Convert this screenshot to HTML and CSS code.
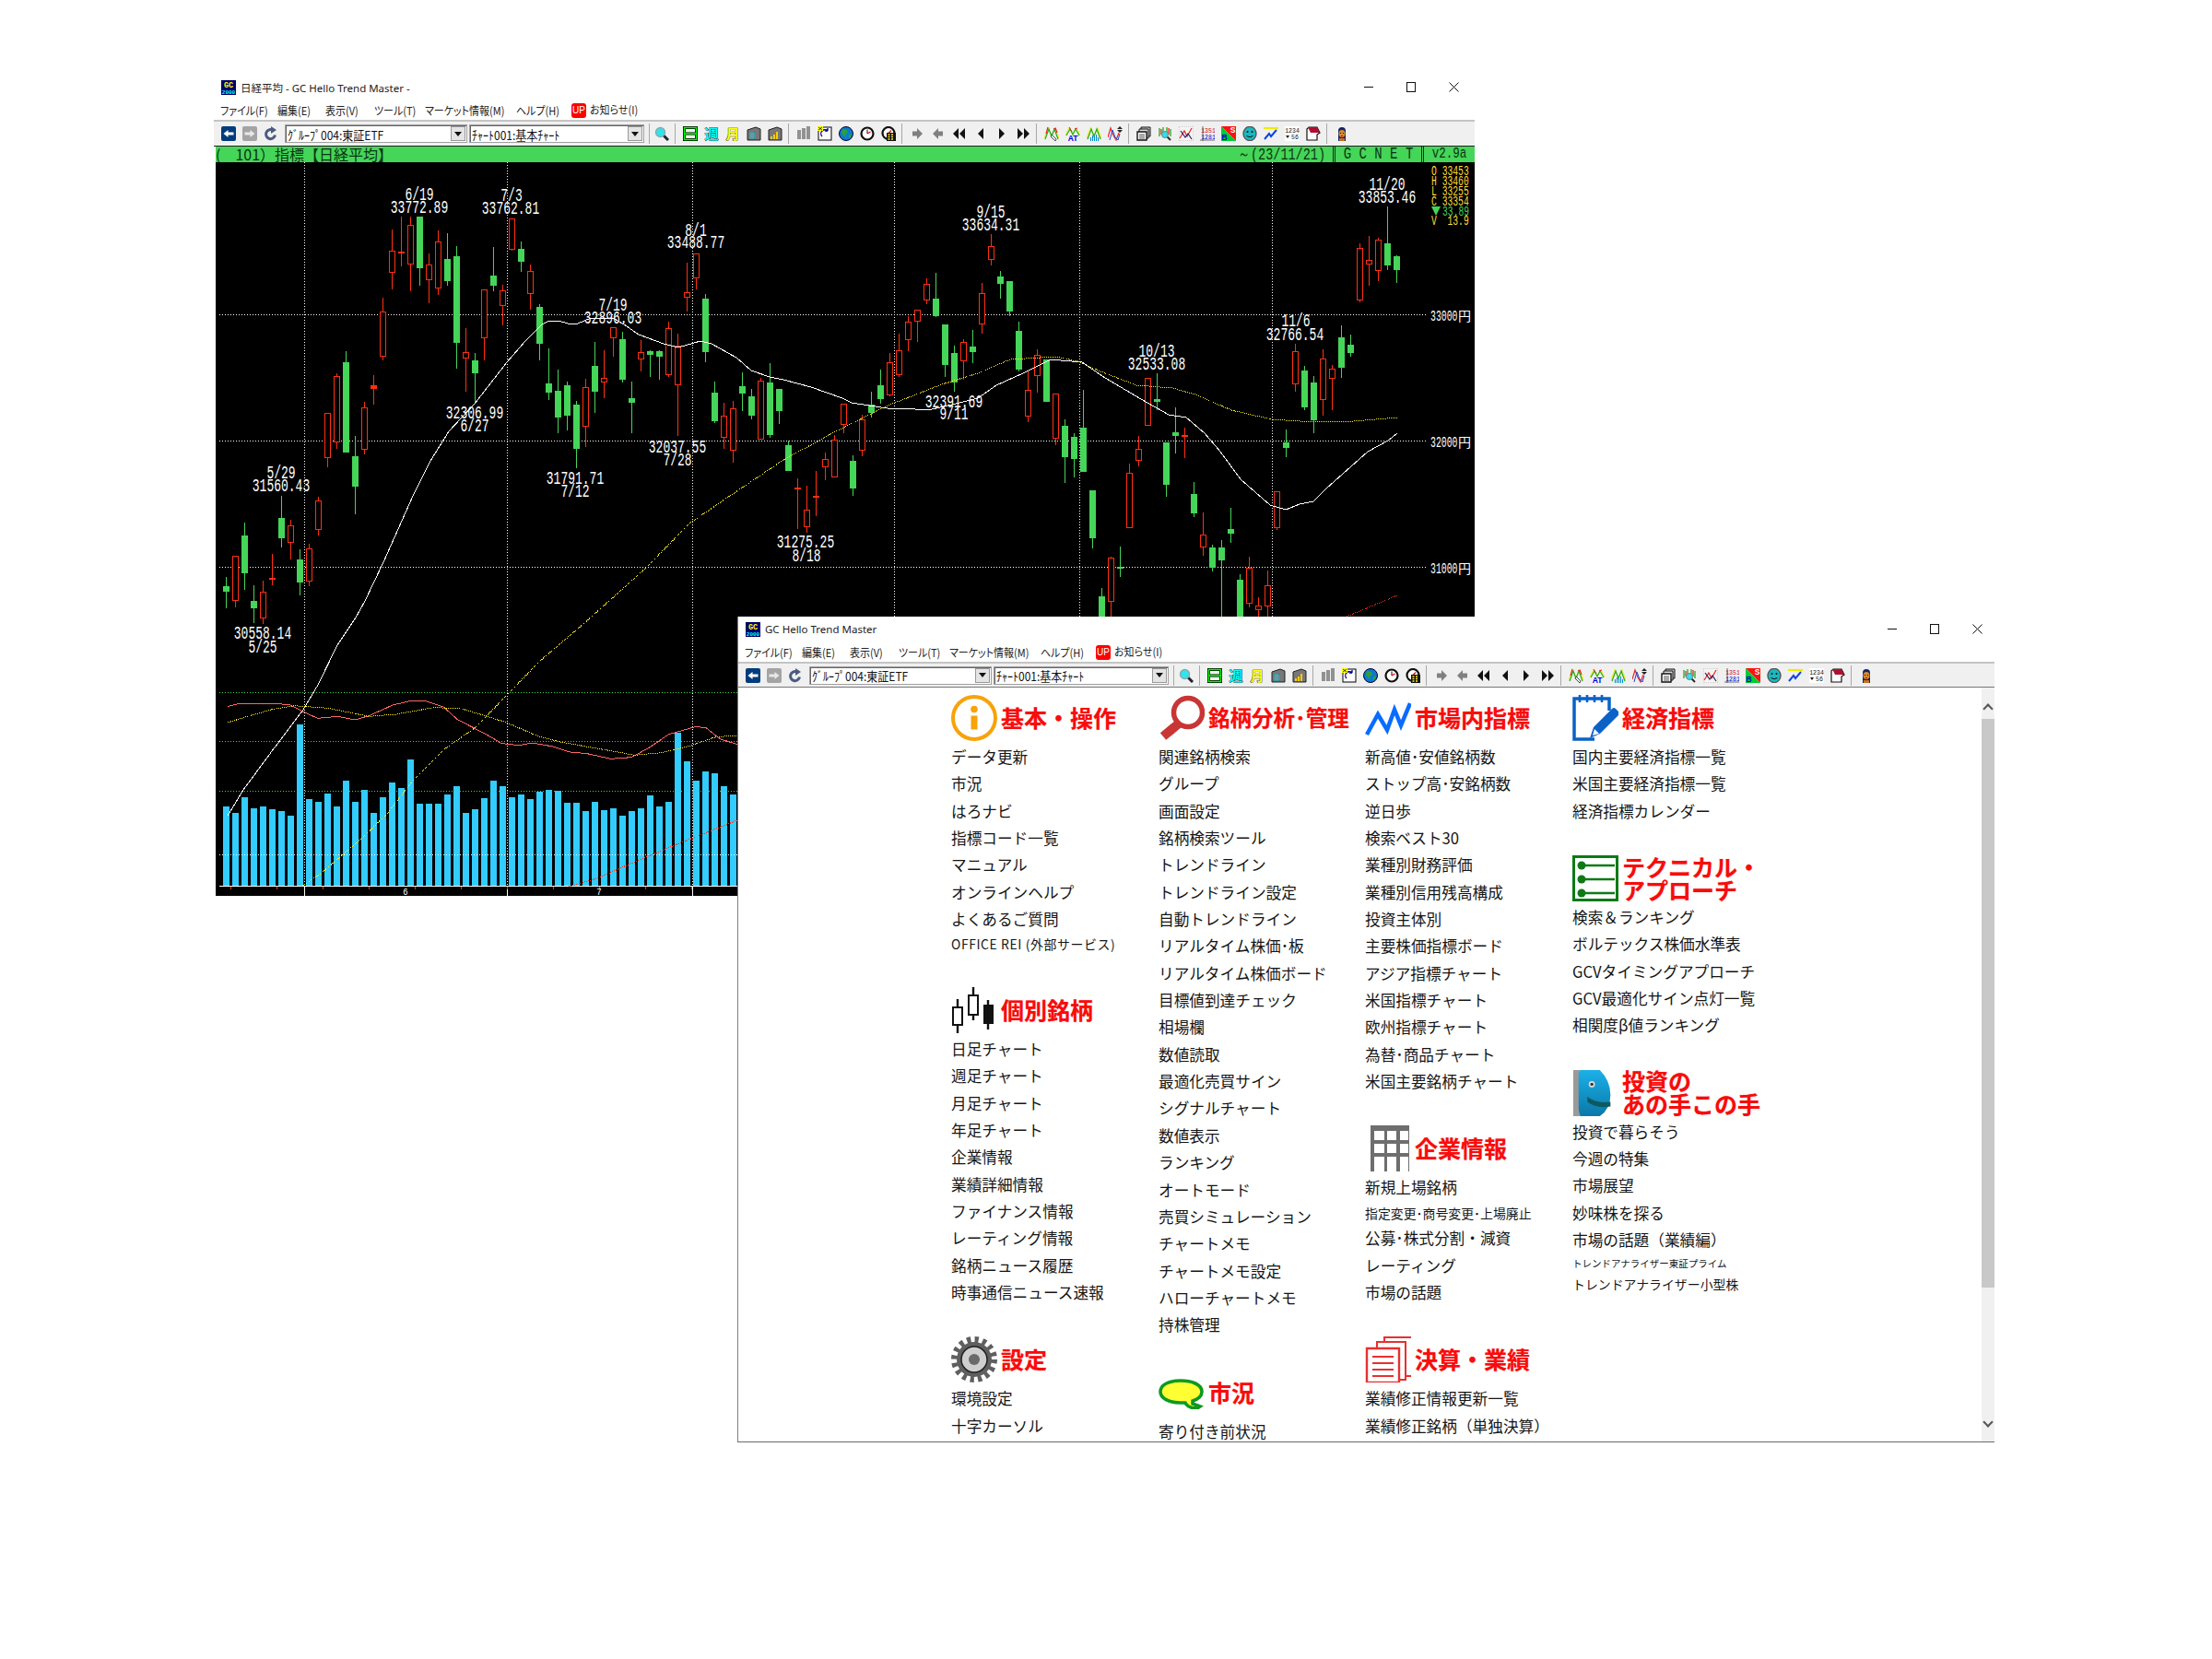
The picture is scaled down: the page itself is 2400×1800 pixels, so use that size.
FILE: index.html
```html
<!DOCTYPE html>
<html lang="ja">
<head>
  <meta charset="UTF-8">
  <title>GC Hello Trend Master</title>
  <link rel="stylesheet" href="styles.css">
</head>
<body>
  <svg class="defs" width="0" height="0">
    <defs>
      <symbol id="t-back" viewBox="0 0 16 16"><rect width="16" height="16" rx="2" fill="#003c7c"/><path d="M2.500 8l5-4v2.500h6v3h-6V12z" fill="#fff"/></symbol>
      <symbol id="t-fwd" viewBox="0 0 16 16"><rect width="16" height="16" rx="2" fill="#a4a4a4"/><path d="M13.500 8l-5-4v2.500h-6v3h6V12z" fill="#e8e8e8"/></symbol>
      <symbol id="t-reload" viewBox="0 0 16 16"><path d="M12.500 9.500a5 5 0 1 1-3-5.500" fill="none" stroke="#4a5c80" stroke-width="3"/><path d="M8 0l6 4-6 4z" fill="#4a5c80"/></symbol>
      <symbol id="t-mag" viewBox="0 0 16 16"><path d="M10 10l5 5" stroke="#223" stroke-width="3"/><circle cx="6.500" cy="6.500" r="5" fill="#2fe4ee" stroke="#8aa" stroke-width="1.400"/></symbol>
      <symbol id="t-day" viewBox="0 0 16 16"><rect x="1.500" y="1.500" width="13" height="13" fill="none" stroke="#000" stroke-width="3"/><path d="M1 8h14" stroke="#000" stroke-width="3"/><rect x="1.500" y="1.500" width="13" height="13" fill="none" stroke="#0f0" stroke-width="1.500"/><path d="M2 8h12" stroke="#0f0" stroke-width="1.500"/></symbol>
      <symbol id="t-week" viewBox="0 0 16 16"><text x="8" y="14" text-anchor="middle" class="tb-glyph" fill="#0ff">週</text></symbol>
      <symbol id="t-month" viewBox="0 0 16 16"><text x="8" y="14" text-anchor="middle" class="tb-glyph" fill="#ff0">月</text></symbol>
      <symbol id="t-bldg" viewBox="0 0 16 16"><path d="M1 4l9-3 5 2v12H1z" fill="#777" stroke="#222"/><path d="M3 6h7v8H3z" fill="#2a8a9a"/><path d="M3 8h7M3 10h7M3 12h7M5 6v8M7 6v8" stroke="#aaa" stroke-width=".6"/></symbol>
      <symbol id="t-bldg2" viewBox="0 0 16 16"><path d="M1 4l9-3 5 2v12H1z" fill="#777" stroke="#222"/><path d="M3 11h2v3H3zM6 9h2v5H6zM9 6h2v8H9z" fill="#fc0"/></symbol>
      <symbol id="t-list" viewBox="0 0 16 16"><path d="M1 5h4M1 7h4M1 9h4M1 11h4M1 13h4M6 3h4M6 5h4M6 7h4M6 9h4M6 11h4M6 13h4M11 1h4M11 3h4M11 5h4M11 7h4M11 9h4M11 11h4M11 13h4" stroke="#333" stroke-width="1"/></symbol>
      <symbol id="t-sync" viewBox="0 0 16 16"><rect x="1" y="1" width="14" height="14" fill="#fff" stroke="#000"/><path d="M5 11a4 4 0 0 1 6-6M11 5l0-3M11 5l-3 0" fill="none" stroke="#008" stroke-width="1.300"/><path d="M0 0h6v5H0z" fill="#ff0"/><path d="M1 1l4 3M5 1L1 4" stroke="#000" stroke-width=".7"/></symbol>
      <symbol id="t-globe" viewBox="0 0 16 16"><circle cx="8" cy="8" r="7.500" fill="#0a7ad0" stroke="#003"/><path d="M4 3l5 1 1 3-3 2 1 3-3-2-2-3zM11 9l3-1-1 4-2 1z" fill="#2aa040"/></symbol>
      <symbol id="t-clock" viewBox="0 0 16 16"><circle cx="8" cy="8" r="6.500" fill="#fff" stroke="#111" stroke-width="2.200"/><path d="M8 8V3.500" stroke="#111"/><path d="M8 8l3.500-2" stroke="#e00" stroke-width="1.200"/></symbol>
      <symbol id="t-calc" viewBox="0 0 16 16"><circle cx="8" cy="7.500" r="6.500" fill="#fff" stroke="#111" stroke-width="2.200"/><path d="M8 7.500l3-3" stroke="#e00" stroke-width="1.200"/><rect x="6" y="7" width="10" height="9" fill="#111"/><path d="M7.500 9h2M11 9h2M7.500 11.500h2M11 11.500h2M7.500 14h2M11 14h2" stroke="#fe3" stroke-width="1.400"/></symbol>
      <symbol id="t-gr" viewBox="0 0 16 16"><path d="M3 5.500h5V2l6 6-6 6v-3.500H3z" fill="#808080"/></symbol>
      <symbol id="t-gl" viewBox="0 0 16 16"><path d="M13 5.500H8V2L2 8l6 6v-3.500h5z" fill="#808080"/></symbol>
      <symbol id="t-ll" viewBox="0 0 16 16"><path d="M7 2v12L1 8zM14 2v12L8 8z" fill="#111"/></symbol>
      <symbol id="t-l" viewBox="0 0 16 16"><path d="M11 2v12L5 8z" fill="#111"/></symbol>
      <symbol id="t-r" viewBox="0 0 16 16"><path d="M5 2v12l6-6z" fill="#111"/></symbol>
      <symbol id="t-rr" viewBox="0 0 16 16"><path d="M2 2v12l6-6zM9 2v12l6-6z" fill="#111"/></symbol>
      <symbol id="t-zz" viewBox="0 0 16 16"><path d="M0 13L4 2l4 8 4-8 4 11" fill="none" stroke="#ee2" stroke-width="1.200"/><path d="M1 14L5 3l3 8 3-8 4 11" fill="none" stroke="#2a2" stroke-width="1.200"/><path d="M2 8l2-7M10 3l3-1M12 2l2 5" fill="none" stroke="#e22" stroke-width="1.200"/><path d="M8 9l5 5-1 2-5-5z" fill="#fff" stroke="#222" stroke-width=".8"/></symbol>
      <symbol id="t-zzat" viewBox="0 0 16 16"><path d="M0 10L4 2l4 6 4-6 4 8" fill="none" stroke="#ee2" stroke-width="1.200"/><path d="M1 10L5 3l3 6 3-6 4 7" fill="none" stroke="#2a2" stroke-width="1.200"/><path d="M4 1l3 5M10 3l3-1" stroke="#e22" stroke-width="1"/><text x="8" y="16" text-anchor="middle" class="tb-at" fill="#00d">AT</text></symbol>
      <symbol id="t-zzbar" viewBox="0 0 16 16"><path d="M0 13L4 2l4 8 4-8 4 11" fill="none" stroke="#ee2" stroke-width="1.200"/><path d="M1 14L5 3l3 8 3-8 4 11" fill="none" stroke="#2a2" stroke-width="1.200"/><path d="M4 12h1v4H4zM6 10h1v6H6zM8 11h1v5H8zM10 9h1v7h-1zM12 12h1v4h-1z" fill="#08c"/></symbol>
      <symbol id="t-zzsw" viewBox="0 0 16 16"><path d="M0 12L3 2l3 8 3 5 3-8" fill="none" stroke="#e22" stroke-width="1.200"/><path d="M2 15L5 4l3 8 3 3 2-7" fill="none" stroke="#24c" stroke-width="1"/><path d="M13 0l3 3h-6zM13 7l3-3h-6z" fill="#222"/></symbol>
      <symbol id="t-docs" viewBox="0 0 16 16"><path d="M5 1h10v10H5z" fill="#ccc" stroke="#111"/><path d="M3 3h10v10H3z" fill="#ddd" stroke="#111"/><path d="M1 6h10v9H1z" fill="#fff" stroke="#111" stroke-width="1.400"/><path d="M3 9h6M3 11h6M3 13h6" stroke="#555"/></symbol>
      <symbol id="t-zzmag" viewBox="0 0 16 16"><path d="M2 2v9M6 1v9M10 1v9M14 3v8" stroke="#2a2" stroke-width="1.300"/><path d="M4 3v6M12 2v7" stroke="#e22" stroke-width="1.300"/><path d="M10 11l4 4" stroke="#222" stroke-width="1.800"/><circle cx="8" cy="9" r="3.500" fill="#3de" stroke="#688"/></symbol>
      <symbol id="t-cross" viewBox="0 0 16 16"><rect width="16" height="16" fill="#f4f4f4" stroke="#aaa" stroke-dasharray="1 1"/><path d="M1 13L6 5l3 6 5-9" fill="none" stroke="#e22" stroke-width="1.200"/><path d="M2 5l5 7 3-4 4 6" fill="none" stroke="#226" stroke-width="1.200"/></symbol>
      <symbol id="t-nums" viewBox="0 0 16 16"><text x="9" y="7" text-anchor="middle" class="tb-num" fill="#c00">1351</text><text x="9" y="14" text-anchor="middle" class="tb-num" fill="#00c">1281</text><path d="M0 15h16M3 0v16" stroke="#333" stroke-width=".7"/></symbol>
      <symbol id="t-bs" viewBox="0 0 16 16"><path d="M0 0h16v16z" fill="#f11"/><path d="M0 0v16h16z" fill="#0c3"/><text x="12.500" y="7" text-anchor="middle" class="tb-at" fill="#fff">S</text><text x="3.500" y="15" text-anchor="middle" class="tb-at" fill="#00d">B</text></symbol>
      <symbol id="t-smile" viewBox="0 0 16 16"><ellipse cx="8" cy="8" rx="7" ry="7.600" fill="#1ab8c0" stroke="#555" stroke-width="1.400"/><circle cx="5.500" cy="6" r="1" fill="#111"/><circle cx="10.500" cy="6" r="1" fill="#111"/><path d="M4.500 10.500q3.500 2.500 7 0" fill="none" stroke="#111" stroke-width="1"/></symbol>
      <symbol id="t-line" viewBox="0 0 16 16"><path d="M0 2h16" stroke="#ee0" stroke-width="2.200"/><path d="M1 14l5-6 2 3 6-7" fill="none" stroke="#14d" stroke-width="2"/></symbol>
      <symbol id="t-1234" viewBox="0 0 16 16"><rect width="16" height="16" fill="#fff"/><text x="8" y="7" text-anchor="middle" class="tb-num" fill="#111">1234</text><path d="M1 10h4l-2 3z" fill="#111"/><text x="11" y="14" text-anchor="middle" class="tb-num" fill="#111">56</text></symbol>
      <symbol id="t-note" viewBox="0 0 16 16"><path d="M3 1h9l3 6-3 2v6H1V3z" fill="#fff" stroke="#111" stroke-width="1.200"/><path d="M2 1h10l3 6H5z" fill="#b01030"/></symbol>
      <symbol id="t-girl" viewBox="0 0 16 16"><path d="M4 16V5a4 4 0 0 1 8 0v11z" fill="#14246a"/><ellipse cx="8" cy="8" rx="3.500" ry="4" fill="#d88a30"/><path d="M6 7.500h1M9 7.500h1" stroke="#111"/><path d="M7 10.500h2" stroke="#c01"/><path d="M5 16v-3h6v3z" fill="#c67020"/></symbol>

      <symbol id="h-info" viewBox="0 0 50 50"><circle cx="25" cy="25" r="23" fill="none" stroke="#f7a30a" stroke-width="4"/><circle cx="25" cy="15.500" r="3.800" fill="#f7a30a"/><path d="M21.500 22.500h7v15h-7z" fill="#f7a30a"/></symbol>
      <symbol id="h-mag" viewBox="0 0 50 50"><circle cx="32" cy="19" r="15.500" fill="none" stroke="#c93535" stroke-width="5.500"/><path d="M22 31L5 45" stroke="#c93535" stroke-width="10"/></symbol>
      <symbol id="h-line" viewBox="0 0 50 50"><path d="M2 43l12-22 10 17 8-22 7 17L49 9" fill="none" stroke="#0a6cff" stroke-width="4.500"/></symbol>
      <symbol id="h-note" viewBox="0 0 50 50"><path d="M24 48H2V4h38v13" fill="none" stroke="#0a62c8" stroke-width="3.500"/><path d="M8 0v8M16 0v8M24 0v8M32 0v8" stroke="#0a62c8" stroke-width="2.600"/><path d="M19 47l4-12 20-20q2-2 4 0l3 3q2 2 0 4L30 42z" fill="#0a62c8"/><path d="M22 44l2-7 5 5z" fill="#fff"/></symbol>
      <symbol id="h-candle" viewBox="0 0 50 50"><path d="M7 13v37M24 0v36M40 14v32" stroke="#111" stroke-width="2.400"/><rect x="2" y="22" width="10" height="19" fill="#fff" stroke="#111" stroke-width="2"/><rect x="19" y="9" width="10" height="21" fill="#fff" stroke="#111" stroke-width="2"/><rect x="35" y="19" width="11" height="21" fill="#111"/></symbol>
      <symbol id="h-gear" viewBox="0 0 50 50"><circle cx="25" cy="25" r="21" fill="none" stroke="#5f5f5f" stroke-width="8" stroke-dasharray="4.120 4.120"/><circle cx="25" cy="25" r="19" fill="#5f5f5f"/><circle cx="25" cy="25" r="14" fill="#cfcfcf" stroke="#222" stroke-width="1.500"/><circle cx="25" cy="25" r="6" fill="#6a6a6a"/></symbol>
      <symbol id="h-talk" viewBox="0 0 50 33"><path d="M24 2c12 0 23 4 23 12 0 5-4 8-10 10l0 3 8 3-3 2c-6 0-11-2-13-6-1 0-3 0-5 0C11 26 2 21 2 14 2 6 12 2 24 2z" fill="#ffff33" stroke="#0c9a22" stroke-width="3.600"/></symbol>
      <symbol id="h-bldg" viewBox="0 0 50 50"><path d="M6 0h42v50H6z" fill="#6e6e6e"/><path d="M10 6h11v10H10zM24 6h10v10H24zM38 6h9v10h-9zM10 20h11v10H10zM24 20h10v10H24zM38 20h9v10h-9zM10 34h11v16H10zM24 34h10v16H24zM38 34h9v16h-9z" fill="#fff"/></symbol>
      <symbol id="h-docs" viewBox="0 0 50 50"><path d="M21 9V1h30v42h-7" fill="#fff" stroke="#e83030" stroke-width="2"/><path d="M13 13V6h31v41h-7" fill="#fff" stroke="#e83030" stroke-width="2"/><path d="M2 13h35v37H2z" fill="#fff" stroke="#e83030" stroke-width="2.400"/><path d="M8 22h23M8 29h23M8 36h23M8 43h23" stroke="#e83030" stroke-width="2"/></symbol>
      <symbol id="h-steps" viewBox="0 0 50 50"><rect x="1.500" y="1.500" width="47" height="47" fill="#fff" stroke="#0d7a16" stroke-width="3"/><path d="M10 11h36M10 26h36M10 41h36" stroke="#0d7a16" stroke-width="2.400"/><circle cx="10" cy="11" r="4.500" fill="#0d7a16"/><circle cx="10" cy="26" r="4.500" fill="#0d7a16"/><circle cx="10" cy="41" r="4.500" fill="#0d7a16"/></symbol>
      <symbol id="h-face" viewBox="0 0 50 52"><defs><linearGradient id="face-g" x1="0" y1="0" x2="0" y2="1"><stop offset="0" stop-color="#1cb0e8"/><stop offset="1" stop-color="#0a78a8"/></linearGradient></defs><rect width="8" height="52" fill="#999"/><path d="M6 0h24q12 12 12 28T30 52H6z" fill="url(#face-g)"/><path d="M0 0h8q-8 12-6 26t6 26H0z" fill="#9a9a9a"/><circle cx="21" cy="16" r="3.500" fill="#ddd"/><circle cx="21" cy="16" r="1.800" fill="#333"/><path d="M16 30q8 8 26 6v5q-16 3-26-5z" fill="#0c5a60"/></symbol>
    </defs>
  </svg>

  <section class="window chart-window">
    <div class="titlebar">
      <svg class="app-icon" viewBox="0 0 16 16"><rect width="16" height="16" fill="#00006a"/><text x="8" y="8" text-anchor="middle" class="app-gc">GC</text><text x="8" y="15" text-anchor="middle" class="app-2000">2000</text></svg>
      <span class="title-text">日経平均 - GC Hello Trend Master -</span>
      <div class="win-btns"><span class="win-min"></span><span class="win-max"></span><span class="win-close"><svg width="11" height="11"><path d="M.5 .5l10 10M10.500 .5l-10 10" stroke="#111" fill="none"/></svg></span></div>
    </div>
    <div class="menubar"></div>
    <div class="toolbar"></div>
    <div class="statusbar">
      <span class="status-name">(　101）指標【日経平均】</span>
      <span class="status-date"><span class="tall">～(23/11/21)</span></span>
      <span class="status-cell gcnet"><span class="tall">G C N E T</span></span>
      <span class="status-cell ver"><span class="tall">v2.9a</span></span>
    </div>
    <svg id="chart" class="chart" viewBox="234 176 1366 796"></svg>
  </section>

  <section class="window menu-window">
    <div class="titlebar">
      <svg class="app-icon" viewBox="0 0 16 16"><rect width="16" height="16" fill="#00006a"/><text x="8" y="8" text-anchor="middle" class="app-gc">GC</text><text x="8" y="15" text-anchor="middle" class="app-2000">2000</text></svg>
      <span class="title-text">GC Hello Trend Master</span>
      <div class="win-btns"><span class="win-min"></span><span class="win-max"></span><span class="win-close"><svg width="11" height="11"><path d="M.5 .5l10 10M10.500 .5l-10 10" stroke="#111" fill="none"/></svg></span></div>
    </div>
    <div class="menubar"></div>
    <div class="toolbar"></div>
    <div class="menu-body">
      <div class="menu-grid">
        <div class="menu-col">
          <div class="sec">
            <div class="sec-head"><svg class="sec-icon"><use href="#h-info"/></svg><h2 class="sec-title">基本・操作</h2></div>
            <ul>
              <li>データ更新</li><li>市況</li><li>はろナビ</li><li>指標コード一覧</li><li>マニュアル</li><li>オンラインヘルプ</li><li>よくあるご質問</li><li class="small wide">OFFICE REI (外部サービス)</li>
            </ul>
          </div>
          <div class="sec">
            <div class="sec-head"><svg class="sec-icon"><use href="#h-candle"/></svg><h2 class="sec-title">個別銘柄</h2></div>
            <ul>
              <li>日足チャート</li><li>週足チャート</li><li>月足チャート</li><li>年足チャート</li><li>企業情報</li><li>業績詳細情報</li><li>ファイナンス情報</li><li>レーティング情報</li><li>銘柄ニュース履歴</li><li>時事通信ニュース速報</li>
            </ul>
          </div>
          <div class="sec">
            <div class="sec-head"><svg class="sec-icon"><use href="#h-gear"/></svg><h2 class="sec-title">設定</h2></div>
            <ul>
              <li>環境設定</li><li>十字カーソル</li>
            </ul>
          </div>
        </div>
        <div class="menu-col">
          <div class="sec">
            <div class="sec-head"><svg class="sec-icon"><use href="#h-mag"/></svg><h2 class="sec-title narrow">銘柄分析･管理</h2></div>
            <ul>
              <li>関連銘柄検索</li><li>グループ</li><li>画面設定</li><li>銘柄検索ツール</li><li>トレンドライン</li><li>トレンドライン設定</li><li>自動トレンドライン</li><li>リアルタイム株価･板</li><li>リアルタイム株価ボード</li><li>目標値到達チェック</li><li>相場欄</li><li>数値読取</li><li>最適化売買サイン</li><li>シグナルチャート</li><li>数値表示</li><li>ランキング</li><li>オートモード</li><li>売買シミュレーション</li><li>チャートメモ</li><li>チャートメモ設定</li><li>ハローチャートメモ</li><li>持株管理</li>
            </ul>
          </div>
          <div class="sec">
            <div class="sec-head"><svg class="sec-icon talk"><use href="#h-talk"/></svg><h2 class="sec-title">市況</h2></div>
            <ul>
              <li>寄り付き前状況</li>
            </ul>
          </div>
        </div>
        <div class="menu-col">
          <div class="sec">
            <div class="sec-head"><svg class="sec-icon"><use href="#h-line"/></svg><h2 class="sec-title">市場内指標</h2></div>
            <ul>
              <li>新高値･安値銘柄数</li><li>ストップ高･安銘柄数</li><li>逆日歩</li><li>検索ベスト30</li><li>業種別財務評価</li><li>業種別信用残高構成</li><li>投資主体別</li><li>主要株価指標ボード</li><li>アジア指標チャート</li><li>米国指標チャート</li><li>欧州指標チャート</li><li>為替･商品チャート</li><li>米国主要銘柄チャート</li>
            </ul>
          </div>
          <div class="sec">
            <div class="sec-head"><svg class="sec-icon"><use href="#h-bldg"/></svg><h2 class="sec-title">企業情報</h2></div>
            <ul>
              <li>新規上場銘柄</li><li class="small">指定変更･商号変更･上場廃止</li><li>公募･株式分割・減資</li><li>レーティング</li><li>市場の話題</li>
            </ul>
          </div>
          <div class="sec">
            <div class="sec-head"><svg class="sec-icon"><use href="#h-docs"/></svg><h2 class="sec-title">決算・業績</h2></div>
            <ul>
              <li>業績修正情報更新一覧</li><li>業績修正銘柄（単独決算）</li>
            </ul>
          </div>
        </div>
        <div class="menu-col">
          <div class="sec">
            <div class="sec-head"><svg class="sec-icon"><use href="#h-note"/></svg><h2 class="sec-title">経済指標</h2></div>
            <ul>
              <li>国内主要経済指標一覧</li><li>米国主要経済指標一覧</li><li>経済指標カレンダー</li>
            </ul>
          </div>
          <div class="sec">
            <div class="sec-head"><svg class="sec-icon"><use href="#h-steps"/></svg><h2 class="sec-title">テクニカル・<br>アプローチ</h2></div>
            <ul>
              <li>検索＆ランキング</li><li>ボルテックス株価水準表</li><li>GCVタイミングアプローチ</li><li>GCV最適化サイン点灯一覧</li><li>相関度β値ランキング</li>
            </ul>
          </div>
          <div class="sec">
            <div class="sec-head"><svg class="sec-icon"><use href="#h-face"/></svg><h2 class="sec-title">投資の<br>あの手この手</h2></div>
            <ul>
              <li>投資で暮らそう</li><li>今週の特集</li><li>市場展望</li><li>妙味株を探る</li><li>市場の話題（業績編）</li><li class="tiny">トレンドアナライザー東証プライム</li><li class="small">トレンドアナライザー小型株</li>
            </ul>
          </div>
        </div>
      </div>
      <div class="scrollbar">
        <span class="scroll-up"></span>
        <div class="scroll-thumb"></div>
        <span class="scroll-down"></span>
      </div>
    </div>
  </section>

  <script src="app.js"></script>
</body>
</html>
```

FILE: styles.css
```css
html, body { margin: 0; padding: 0; background: #fff; }
body { width: 2400px; height: 1800px; position: relative; overflow: hidden; font-family: "Noto Sans CJK JP", sans-serif; color: #111; }
.defs { position: absolute; }

.window { position: absolute; background: #fff; }
.chart-window { left: 232px; top: 81px; width: 1368px; }
.menu-window { left: 800px; top: 669px; width: 1364px; height: 896px; border-left: 1px solid #808080; border-bottom: 1px solid #6a6a6a; box-sizing: border-box; overflow: hidden; }

.titlebar { height: 27px; display: flex; align-items: center; padding-left: 8px; font-size: 12px; color: #222; }
.app-icon { width: 16px; height: 16px; margin-right: 5px; }
.app-gc { font: bold 8.500px "Liberation Mono", monospace; fill: #ff0; }
.app-2000 { font: bold 6px "Liberation Mono", monospace; fill: #0ff; }
.title-text { font-family: "Noto Sans", "Noto Sans CJK JP", sans-serif; font-size: 11.500px; }
.win-btns { margin-left: auto; display: flex; align-items: center; }
.menu-window .win-btns { margin-right: -4px; }
.win-btns span { display: flex; width: 46px; align-items: center; justify-content: center; height: 14px; }
.win-min::before { content: ""; display: block; width: 10px; height: 1px; background: #111; }
.win-max::before { content: ""; display: block; width: 8px; height: 9px; border: 1px solid #111; }

.menubar { height: 22px; display: flex; align-items: center; font-size: 11px; color: #222; font-feature-settings: "palt"; padding-left: 7px; }
.menu-item { white-space: nowrap; flex: none; }
.menu-label { display: inline-block; transform: scaleY(1.12); }
.menu-up { display: inline-block; width: 16px; height: 16px; line-height: 16px; border-radius: 3px; background: #f00; color: #fff; font: 10px/16px "Liberation Sans", sans-serif; text-align: center; margin-right: 4px; vertical-align: middle; }

.toolbar { height: 28px; box-sizing: border-box; display: flex; align-items: center; background: #f0f0f0; border-top: 2px solid #c4c4c4; border-bottom: 1px solid #777; padding-left: 4px; }
.chart-window .toolbar { height: 29px; border-bottom-color: #222; }
.tb-btn { width: 23px; height: 18px; flex: none; display: flex; align-items: center; justify-content: center; }
.tb-btn svg { width: 16px; height: 16px; display: block; }
.tb-sep { width: 1px; height: 22px; background: #a8a8a8; flex: none; margin: 0 4px 0 3px; }
.tb-sep.tight { margin: 0 1px 0 5px; }
.tb-glyph { font: bold 15px "Noto Sans CJK JP", sans-serif; stroke: #000; stroke-width: .7px; paint-order: stroke; }
.tb-at { font: bold 8.500px "Liberation Sans", sans-serif; }
.tb-num { font: 6.500px "Liberation Mono", monospace; }

.combo { flex: none; height: 20px; margin-left: 4px; box-sizing: border-box; display: flex; align-items: center; background: #fff; border: 1px solid #a0a0a0; box-shadow: inset 1px 1px 0 #666; font-size: 12px; padding-left: 2px; overflow: hidden; }
.combo-a { width: 198px; }
.combo-b { width: 190px; margin-left: 2px; }
.combo-text { flex: 1; white-space: nowrap; transform: scaleY(1.1); }
.combo-arrow { width: 16px; height: 16px; margin-right: 1px; flex: none; background: #e4e4e4; border: 1px solid #999; box-sizing: border-box; display: flex; align-items: center; justify-content: center; }
.combo-arrow::before { content: ""; border: 4px solid transparent; border-top: 5px solid #111; border-bottom: 0; }

.statusbar { height: 17px; margin-left: 2px; background: #45d558; color: #0a3412; display: flex; align-items: center; overflow: hidden; font-size: 16px; line-height: 17px; }
.status-name { flex: none; margin-right: auto; white-space: nowrap; }
.status-date { margin-right: 8px; font: 13.500px "Liberation Mono", monospace; }
.status-cell { display: block; height: 17px; box-sizing: border-box; border-left: 3px double #0a3412; text-align: center; font: 12.500px/17px "Liberation Mono", monospace; }
.gcnet { width: 96px; font-size: 14px; }
.ver { width: 58px; }
.tall { display: inline-block; transform: scaleY(1.35); white-space: nowrap; }

.chart { display: block; width: 1366px; height: 796px; margin-left: 2px; background: #000; }
.chart text { font-family: "Liberation Mono", monospace; }
.lbl { font-size: 13px; fill: #fff; text-anchor: middle; }
.ohlc { font-size: 9.700px; fill: #ffdd33; white-space: pre; }
.yen { font-size: 9.800px; fill: #fff; }
.chart .yen-kanji { font-family: "Noto Sans CJK JP", sans-serif; font-size: 14px; fill: #fff; }

.menu-body { height: 819px; display: flex; overflow: hidden; }
.menu-grid { flex: 1; display: grid; grid-template-columns: 225px 224px 225px 225px; align-items: start; padding: 8px 0 0 231px; height: 900px; }
.sec + .sec { margin-top: 33px; }
.sec-head { height: 53px; display: flex; align-items: flex-start; gap: 4px; }
.sec-icon { width: 50px; height: 50px; flex: none; }
.sec-icon.talk { height: 33px; align-self: center; }
.sec-title { margin: 0; align-self: center; color: #f80c0c; font-size: 25px; line-height: 25px; font-weight: 700; white-space: nowrap; position: relative; top: -2px; text-shadow: 0 0 1px rgba(255, 60, 60, .6); }
.sec-title.narrow { font-size: 23.500px; }
.menu-col ul { margin: 0; padding: 0; list-style: none; }
.menu-col li { height: 29.350px; line-height: 29.350px; font-size: 16.670px; white-space: nowrap; color: #151515; }
.menu-col li.small { height: 25.600px; line-height: 25.600px; font-size: 13.900px; }
.menu-col li.wide { letter-spacing: .6px; }
.menu-col li.tiny { height: 21px; line-height: 21px; font-size: 10.500px; }

.scrollbar { width: 14px; flex: none; background: #f0f0f0; display: flex; flex-direction: column; align-items: stretch; }
.scroll-up, .scroll-down { flex: none; position: relative; }
.scroll-up::before, .scroll-down::before { content: ""; position: absolute; left: 3px; width: 6px; height: 6px; border-left: 2px solid #555; border-top: 2px solid #555; }
.scroll-up::before { top: 19px; transform: rotate(45deg); }
.scroll-down::before { top: 4px; transform: rotate(225deg); }
.scroll-up { height: 34px; }
.scroll-thumb { height: 617px; background: #c8c8c8; }
.scroll-down { margin-top: auto; height: 30px; }
```

FILE: app.js
```js
// toolbar and menu are the same in both windows
const menuItems = [
  ["ファイル(F)", 0], ["編集(E)", 62], ["表示(V)", 114], ["ツール(T)", 167],
  ["マーケット情報(M)", 222], ["ヘルプ(H)", 321], ["お知らせ(I)", 381, true]
];
const toolItems = ["back", "fwd", "reload", "comboA", "comboB", "sep0", "mag", "sep",
  "day", "week", "month", "bldg", "bldg2", "sep",
  "list", "sync", "globe", "clock", "calc", "sep",
  "gr", "gl", "ll", "l", "r", "rr", "sep",
  "zz", "zzat", "zzbar", "zzsw", "sep",
  "docs", "zzmag", "cross", "nums", "bs", "smile", "line", "1234", "note", "sep", "girl"];

document.querySelectorAll(".menubar").forEach(bar => {
  bar.innerHTML = menuItems.map(([name, left, up], i) => {
    const next = menuItems[i + 1] ? menuItems[i + 1][1] : left + 120;
    return `<span class="menu-item" style="width:${next - left}px">${up ? '<span class="menu-up">UP</span>' : ""}<span class="menu-label">${name}</span></span>`;
  }).join("");
});

document.querySelectorAll(".toolbar").forEach(bar => {
  bar.innerHTML = toolItems.map(name => {
    if (name === "sep") return '<span class="tb-sep"></span>';
    if (name === "sep0") return '<span class="tb-sep tight"></span>';
    if (name === "comboA") return '<div class="combo combo-a"><span class="combo-text">ｸﾞﾙｰﾌﾟ004:東証ETF</span><span class="combo-arrow"></span></div>';
    if (name === "comboB") return '<div class="combo combo-b"><span class="combo-text">ﾁｬｰﾄ001:基本ﾁｬｰﾄ</span><span class="combo-arrow"></span></div>';
    return `<span class="tb-btn"><svg><use href="#t-${name}"/></svg></span>`;
  }).join("");
});

// chart: coordinates below are page pixels, the viewBox starts at the chart corner
const volume = [345,366,315,351,345,354,360,375,78,321,330,303,345,261,330,291,366,315,267,285,192,336,336,336,306,279,366,354,318,261,279,315,306,321,297,291,294,333,333,360,330,357,351,375,360,351,309,345,330,105,198,261,231,237,279,306];

// [type, wick top, body top, body bottom, wick bottom], one per session
const candles = [
  ["g",626,636,642,660],["r",603,603,652,659],["g",567,581,622,640],["g",635,652,660,676],["r",630,642,671,677],
  ["d",601,627,629,635],["g",538,562,584,594],["r",564,570,589,607],["g",596,607,632,646],["r",590,595,631,636],
  ["r",539,543,575,581],["r",448,448,497,507],["r",405,408,480,487],["g",381,393,491,491],["g",473,495,528,558],
  ["r",436,442,488,493],["d",407,418,422,439],["r",323,338,387,391],["r",249,272,296,314],["d",235,273,275,289],
  ["r",235,244,287,316],["g",235,235,291,310],["r",275,287,304,329],["r",250,262,313,320],["g",253,281,305,310],
  ["g",267,278,372,400],["r",356,382,389,425],["g",383,391,405,437],["r",314,314,367,391],["g",268,299,310,316],
  ["r",309,315,332,353],["r",237,237,271,272],["g",262,270,284,295],["r",287,294,319,336],["g",330,333,373,391],
  ["g",378,416,426,434],["g",401,424,453,470],["g",414,418,451,467],["g",435,439,487,508],["r",411,420,463,485],
  ["g",371,397,425,448],["r",380,410,415,432],["r",355,355,367,387],["g",360,368,412,415],["g",414,432,437,470],
  ["r",369,382,390,403],["g",380,381,385,409],["g",380,381,387,412],["r",349,356,407,409],["r",362,375,418,473],
  ["r",285,317,323,338],["r",275,275,302,314],["g",319,324,382,393],["g",414,426,457,459],["r",437,451,475,487],
  ["r",435,443,489,502],["g",404,419,427,446],["g",422,430,451,455],["r",410,413,477,477],["g",394,415,472,475],
  ["g",422,422,446,460],["g",478,483,511,511],["d",519,529,531,574],["r",527,553,572,578],["d",511,538,540,560],
  ["r",491,498,507,521],["r",472,477,518,518],["r",438,438,461,470],["g",494,500,530,538],["r",450,455,489,495],
  ["g",425,439,448,453],["g",401,418,433,438],["r",383,393,429,430],["r",362,380,407,409],["r",343,349,369,381],
  ["r",336,336,349,371],["r",302,308,326,330],["g",296,324,343,344],["g",352,352,396,409],["g",375,383,415,425],
  ["r",368,371,392,412],["g",358,376,382,394],["r",307,318,352,362],["r",254,267,282,288],["g",294,300,308,324],
  ["g",305,305,338,343],["g",349,359,401,403],["r",403,423,452,458],["r",379,385,408,426],["g",390,390,436,436],
  ["r",427,427,476,483],["g",455,462,496,524],["g",470,474,498,518],["g",423,464,512,512],["g",532,532,584,595],
  ["g",638,647,680,680],["r",604,605,653,680],["g",593,615,617,626],["r",503,513,573,573],["r",473,487,500,506],
  ["r",410,410,462,462],["g",405,433,436,445],["g",480,480,526,539],["g",442,469,473,492],["d",464,472,474,497],
  ["g",523,536,557,561],["r",556,580,594,603],["g",591,594,616,620],["g",586,594,608,670],["g",551,574,579,589],
  ["g",623,629,670,670],["r",604,616,655,659],["r",648,657,662,670],["r",619,635,658,670],["r",533,533,573,575],
  ["g",466,480,486,496],["r",373,381,417,425],["g",397,402,442,445],["g",408,415,456,470],["r",379,389,434,451],
  ["r",396,400,411,445],["g",353,366,399,410],["g",363,374,383,387],["r",264,269,326,328],["r",256,282,287,310],
  ["r",258,260,294,305],["g",224,264,288,293],["g",277,278,293,307]
];

const whiteMA = [[247,885],[264,857],[295,815],[329,770],[345,743],[366,700],[386,670],[396,652],[416,610],[436,565],[448,538],[467,500],[487,468],[515,438],[550,393],[570,370],[588,352],[596,348],[606,348],[616,351],[627,351],[641,345],[665,345],[677,352],[693,363],[720,373],[736,377],[760,370],[772,373],[799,388],[815,402],[835,409],[850,412],[880,420],[914,432],[924,437],[943,440],[963,443],[978,443],[1007,445],[1037,438],[1061,432],[1081,418],[1110,405],[1140,390],[1174,393],[1199,410],[1238,433],[1268,450],[1287,453],[1307,470],[1324,490],[1346,520],[1378,548],[1395,553],[1410,547],[1425,544],[1439,530],[1484,490],[1506,478],[1516,470]];
const yellowMA = [[327,962],[349,947],[392,910],[420,883],[448,847],[483,812],[515,790],[552,752],[586,717],[633,677],[701,616],[748,568],[792,538],[850,499],[907,468],[963,440],[1022,417],[1061,405],[1096,390],[1145,387],[1169,392],[1194,403],[1233,418],[1272,421],[1297,428],[1336,445],[1380,455],[1425,458],[1469,457],[1516,453]];
const redMA = [[617,962],[648,953],[689,935],[737,915],[800,890],[1461,669],[1516,646]];
const oscRed = [[45,20],[80,10],[190,10],[230,15],[270,38],[310,58],[370,52],[420,63],[460,50],[530,15],[580,2],[630,3],[680,22],[720,62],[800,108],[850,140],[900,146],[940,138],[1000,150],[1050,168],[1100,173],[1170,190],[1230,185],[1280,155],[1340,110],[1420,85],[1450,90],[1490,125],[1540,143]];
const oscYellow = [[45,72],[110,50],[180,28],[240,17],[340,25],[460,52],[540,45],[650,23],[730,26],[860,70],[960,118],[1020,135],[1150,160],[1240,178],[1320,170],[1400,148],[1480,118],[1540,115]];

const labels = [
  [455,210,"6/19"],[455,224,"33772.89"],[555,211,"7/3"],[554,225,"33762.81"],[755,249,"8/1"],[755,262,"33488.77"],
  [665,330,"7/19"],[665,344,"32896.03"],[515,447,"32306.99"],[515,461,"6/27"],[305,512,"5/29"],[305,526,"31560.43"],
  [285,686,"30558.14"],[285,701,"5/25"],[624,518,"31791.71"],[624,532,"7/12"],[735,484,"32037.55"],[735,498,"7/28"],
  [1075,229,"9/15"],[1075,243,"33634.31"],[1505,199,"11/20"],[1505,213,"33853.46"],[1406,347,"11/6"],[1405,362,"32766.54"],
  [1255,380,"10/13"],[1255,394,"32533.08"],[1035,435,"32391.69"],[1035,448,"9/11"],[874,587,"31275.25"],[875,602,"8/18"]
];

const RED = "#ff3010", GREEN = "#45d558";
const gridX = [330, 550, 751, 970, 1171, 1380];
const gridY = [341, 478, 615];
let svg = "";

const rect = (x, y, w, h, fill, stroke) =>
  `<rect x="${x}" y="${y}" width="${w}" height="${h}" fill="${fill}"${stroke ? ` stroke="${stroke}"` : ""} shape-rendering="crispEdges"/>`;
const hline = (y, x1, x2, color, dash) =>
  `<path d="M${x1} ${y + .5}H${x2}" stroke="${color}"${dash ? ` stroke-dasharray="${dash}"` : ""} shape-rendering="crispEdges"/>`;
const vline = (x, y1, y2, color, dash) =>
  `<path d="M${x + .5} ${y1}V${y2}" stroke="${color}"${dash ? ` stroke-dasharray="${dash}"` : ""} shape-rendering="crispEdges"/>`;
const poly = (pts, color, dash) =>
  `<polyline points="${pts.map(p => p.join(",")).join(" ")}" fill="none" stroke="${color}"${dash ? ` stroke-dasharray="${dash}"` : ""} shape-rendering="crispEdges"/>`;

volume.forEach((c, i) => {
  const top = Math.round(760 + c / 3);
  svg += rect(242 + i * 10, top, 7, 961 - top, "#33ccff");
});

gridX.forEach(x => { svg += vline(x, 176, 961, "#fff", "1 2"); });
gridY.forEach(y => { svg += hline(y, 238, 1549, "#fff", "1 2"); });
[751, 804, 858].forEach(y => { svg += hline(y, 238, 800, "#33dd44", "1 2"); });
svg += hline(927, 238, 800, "#fff", "1 2");
svg += hline(961, 238, 800, "#fff");
gridX.slice(0, 3).forEach(x => { svg += vline(x, 961, 972, "#fff"); });
for (let x = 250; x < 800; x += 50) svg += vline(x, 962, 965, RED);

candles.forEach((c, i) => {
  const [type, wt, bt, bb, wb] = c;
  const x = Math.round(245 + i * 10.002);
  const color = type === "g" ? GREEN : RED;
  svg += vline(x, wt, wb, color);
  if (type === "g") svg += rect(x - 3, bt, 7, bb - bt, color);
  else if (type === "d") svg += rect(x - 3, bt, 7, bb - bt, color);
  else svg += rect(x - 2.5, bt + .5, 6, bb - bt - 1, "#000", color);
});

svg += poly(whiteMA, "#fff");
svg += poly(yellowMA, "#ffee22", "1 1");
svg += poly(redMA, "#ff3010", "1 1");
svg += poly(oscRed.map(p => [230 + p[0] / 2.703, 760 + p[1] / 3]), "#ff6666");
svg += poly(oscYellow.map(p => [230 + p[0] / 2.703, 760 + p[1] / 3]), "#ffee22", "1 1");

labels.forEach(([x, y, t]) => {
  svg += `<text class="lbl" transform="translate(${x} ${y + 6.5}) scale(1 1.55)">${t}</text>`;
});

[[341, "33000"], [478, "32000"], [615, "31000"]].forEach(([y, t]) => {
  svg += `<text class="yen" transform="translate(1552 ${y + 6.5}) scale(1 1.6)">${t}</text>`;
  svg += `<text class="yen-kanji" x="1582" y="${y + 6.5}">円</text>`;
});

[["O 33453", 185], ["H 33460", 196], ["L 33255", 207], ["C 33354", 218], ["V  13.9", 239]].forEach(([t, y]) => {
  svg += `<text class="ohlc" transform="translate(1553 ${y + 5}) scale(1 1.5)">${t}</text>`;
});
svg += `<path d="M1553 224h10l-5 10z" fill="${GREEN}"/>`;
svg += `<text class="ohlc" style="fill:${GREEN}" transform="translate(1565 234) scale(1 1.5)">33.89</text>`;

[[440, "6"], [650, "7"]].forEach(([x, t]) => {
  svg += `<text class="lbl" style="font-size:9px" transform="translate(${x} 971) scale(1 1.3)">${t}</text>`;
});

document.getElementById("chart").innerHTML = svg;
```
